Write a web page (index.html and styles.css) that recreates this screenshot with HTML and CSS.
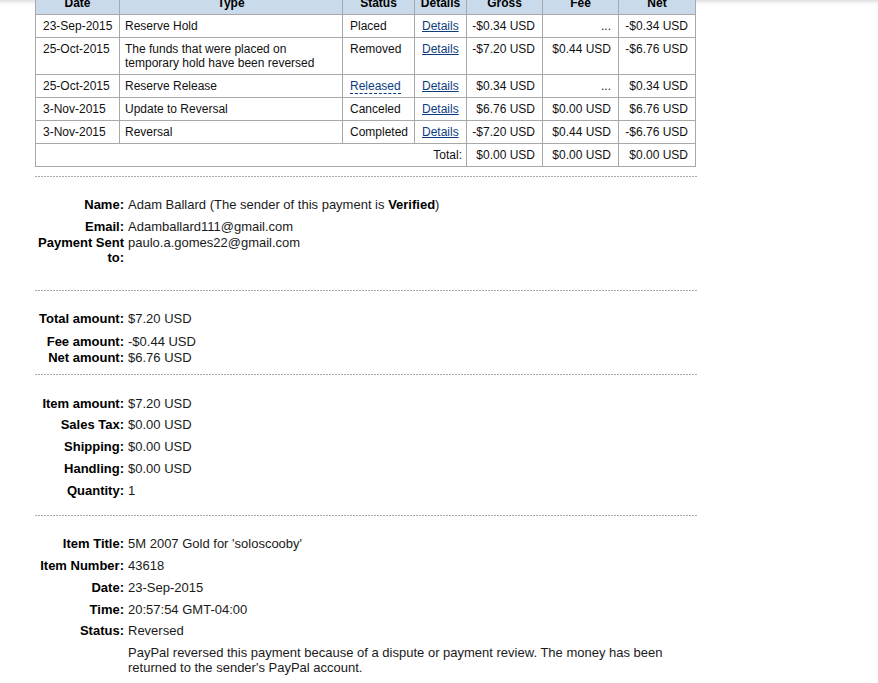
FILE: index.html
```html
<!DOCTYPE html>
<html>
<head>
<meta charset="utf-8">
<link rel="stylesheet" href="styles.css">
</head>
<body>
<div class="page">
  <table class="history">
    <colgroup>
      <col class="c-date"><col class="c-type"><col class="c-status"><col class="c-details"><col class="c-gross"><col class="c-fee"><col class="c-net">
    </colgroup>
    <thead>
      <tr><th>Date</th><th>Type</th><th>Status</th><th>Details</th><th>Gross</th><th>Fee</th><th>Net</th></tr>
    </thead>
    <tbody>
      <tr><td>23-Sep-2015</td><td class="type">Reserve Hold</td><td>Placed</td><td><a class="link" href="#">Details</a></td><td class="num">-$0.34 USD</td><td class="num">...</td><td class="num">-$0.34 USD</td></tr>
      <tr><td>25-Oct-2015</td><td class="type">The funds that were placed on temporary hold have been reversed</td><td>Removed</td><td><a class="link" href="#">Details</a></td><td class="num">-$7.20 USD</td><td class="num">$0.44 USD</td><td class="num">-$6.76 USD</td></tr>
      <tr><td>25-Oct-2015</td><td class="type">Reserve Release</td><td><span class="abbr">Released</span></td><td><a class="link" href="#">Details</a></td><td class="num">$0.34 USD</td><td class="num">...</td><td class="num">$0.34 USD</td></tr>
      <tr><td>3-Nov-2015</td><td class="type">Update to Reversal</td><td>Canceled</td><td><a class="link" href="#">Details</a></td><td class="num">$6.76 USD</td><td class="num">$0.00 USD</td><td class="num">$6.76 USD</td></tr>
      <tr><td>3-Nov-2015</td><td class="type">Reversal</td><td>Completed</td><td><a class="link" href="#">Details</a></td><td class="num">-$7.20 USD</td><td class="num">$0.44 USD</td><td class="num">-$6.76 USD</td></tr>
      <tr><td colspan="4" class="total-label">Total:</td><td class="num">$0.00 USD</td><td class="num">$0.00 USD</td><td class="num">$0.00 USD</td></tr>
    </tbody>
  </table>

  <div class="sep first-sep"></div>
  <section class="details s1">
    <div class="row"><div class="label">Name:</div><div class="value">Adam Ballard (The sender of this payment is <b>Verified</b>)</div></div>
    <div class="row"><div class="label">Email:</div><div class="value">Adamballard111@gmail.com</div></div>
    <div class="row tight"><div class="label">Payment Sent to:</div><div class="value">paulo.a.gomes22@gmail.com</div></div>
  </section>

  <div class="sep"></div>
  <section class="details s2">
    <div class="row"><div class="label">Total amount:</div><div class="value">$7.20 USD</div></div>
    <div class="row loose"><div class="label">Fee amount:</div><div class="value">-$0.44 USD</div></div>
    <div class="row tight"><div class="label">Net amount:</div><div class="value">$6.76 USD</div></div>
  </section>

  <div class="sep"></div>
  <section class="details s3">
    <div class="row"><div class="label">Item amount:</div><div class="value">$7.20 USD</div></div>
    <div class="row"><div class="label">Sales Tax:</div><div class="value">$0.00 USD</div></div>
    <div class="row"><div class="label">Shipping:</div><div class="value">$0.00 USD</div></div>
    <div class="row"><div class="label">Handling:</div><div class="value">$0.00 USD</div></div>
    <div class="row"><div class="label">Quantity:</div><div class="value">1</div></div>
  </section>

  <div class="sep"></div>
  <section class="details s4">
    <div class="row"><div class="label">Item Title:</div><div class="value">5M 2007 Gold for 'soloscooby'</div></div>
    <div class="row"><div class="label">Item Number:</div><div class="value">43618</div></div>
    <div class="row"><div class="label">Date:</div><div class="value">23-Sep-2015</div></div>
    <div class="row"><div class="label">Time:</div><div class="value">20:57:54 GMT-04:00</div></div>
    <div class="row"><div class="label">Status:</div><div class="value">Reversed</div></div>
    <div class="row"><div class="label"></div><div class="value note">PayPal reversed this payment because of a dispute or payment review. The money has been returned to the sender's PayPal account.</div></div>
  </section>
</div>
</body>
</html>
```

FILE: styles.css
```css
html, body {
  margin: 0;
  padding: 0;
}
body {
  background: #fff linear-gradient(#e0e0e0, #f6f6f6 3px, #fff 6px) no-repeat;
  background-size: 100% 6px;
  font-family: "Liberation Sans", Arial, sans-serif;
  color: #000;
}
.page {
  width: 662px;
  margin-left: 35px;
}
.history {
  width: 660px;
  margin-top: -9px;
  border-collapse: collapse;
  table-layout: fixed;
  font-size: 12px;
  line-height: 14px;
  background: #fff;
}
.c-date { width: 84px; }
.c-type { width: 223px; }
.c-status { width: 72px; }
.c-details { width: 52px; }
.c-gross { width: 76px; }
.c-fee { width: 76px; }
.c-net { width: 77px; }
.history th,
.history td {
  border: 1px solid #a8a8a8;
  padding: 4px 1px 4px 7px;
  vertical-align: top;
  text-align: left;
  color: #111;
  white-space: nowrap;
}
.history th {
  background: #c9daeb;
  font-weight: bold;
  text-align: center;
  color: #000;
  padding-left: 1px;
}
.history td.type {
  padding-left: 5px;
  padding-right: 2px;
  white-space: normal;
}
.history td.num,
.history td.total-label {
  text-align: right;
  padding-left: 1px;
  padding-right: 7px;
}
.history td.total-label {
  padding-right: 4px;
}
.link {
  color: #0c3d7e;
  text-decoration: underline;
}
.abbr {
  color: #0c3d7e;
  border-bottom: 1px dashed #0c3d7e;
}
.sep {
  height: 1px;
  background: repeating-linear-gradient(90deg, #a8a8a8 0, #a8a8a8 2px, transparent 2px, transparent 3px);
}
.first-sep {
  margin-top: 9px;
}
.details {
  padding-top: 14px;
  font-size: 13px;
  line-height: 15px;
}
.s1 { padding-top: 13px; padding-bottom: 25px; }
.s2 { padding-bottom: 9px; }
.s3 { padding-bottom: 17px; }
.s4 { padding-bottom: 10px; }
.row {
  display: flex;
  gap: 4px;
  margin-top: 6.75px;
}
.row.tight { margin-top: 1px; }
.row.loose { margin-top: 7.5px; }
.label {
  flex: 0 0 89px;
  text-align: right;
  font-weight: bold;
  color: #000;
}
.value {
  flex: 1;
  color: #1a1a1a;
}
.value b {
  color: #000;
}
.note {
  max-width: 560px;
}
```
